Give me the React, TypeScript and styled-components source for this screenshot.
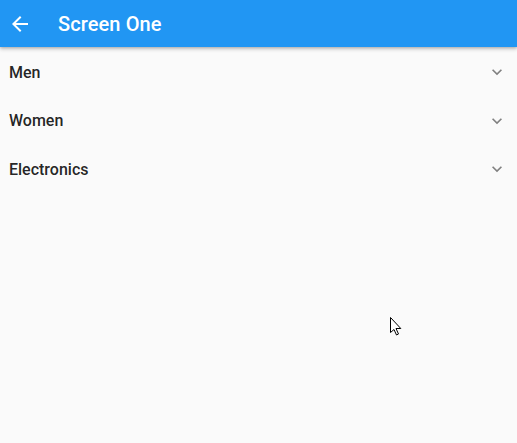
import React from "react";
import styled, { createGlobalStyle } from "styled-components";

const Global = createGlobalStyle`
  html, body { margin: 0; padding: 0; background: #fafafa; }
  body { font-family: Roboto, "Noto Sans", "Liberation Sans", sans-serif; }
`;

const Page = styled.div`
  position: relative;
  width: 517px;
  height: 443px;
  background: #fafafa;
  overflow: hidden;
`;

const AppBar = styled.header`
  height: 47px;
  background: #2196f3;
  display: flex;
  align-items: center;
  box-shadow: 0 2px 4px rgba(0, 0, 0, 0.22), 0 1px 2px rgba(0, 0, 0, 0.12);
  position: relative;
  z-index: 1;
`;

const IconButton = styled.button`
  width: 24px;
  height: 24px;
  margin-left: 8px;
  padding: 0;
  border: 0;
  background: none;
  display: flex;
  align-items: center;
  justify-content: center;
  color: #fff;
`;

const Title = styled.h1`
  margin: 0 0 0 26px;
  color: #fff;
  font-size: 20px;
  font-weight: 500;
  letter-spacing: 0.1px;
`;

const List = styled.div`
  display: flex;
  flex-direction: column;
  padding-top: 1px;
`;

const Tile = styled.div<{ $h: number }>`
  height: ${(p) => p.$h}px;
  display: flex;
  align-items: center;
  justify-content: space-between;
  padding: 0 10px 0 9px;
`;

const TileLabel = styled.span`
  font-size: 16px;
  font-weight: 500;
  color: rgba(0, 0, 0, 0.87);
`;

const Chevron = styled.span`
  width: 20px;
  height: 20px;
  display: flex;
  align-items: center;
  justify-content: center;
  color: #808080;
`;

const Cursor = styled.svg`
  position: absolute;
  left: 390px;
  top: 317px;
`;

const items = [
  { label: "Men", h: 48 },
  { label: "Women", h: 49 },
  { label: "Electronics", h: 48 },
];

export default function App() {
  return (
    <Page>
      <Global />
      <AppBar>
        <IconButton aria-label="back">
          <svg width="24" height="24" viewBox="0 0 24 24">
            <path
              fill="currentColor"
              d="M20 11H7.83l5.59-5.59L12 4l-8 8 8 8 1.41-1.41L7.83 13H20v-2z"
            />
          </svg>
        </IconButton>
        <Title>Screen One</Title>
      </AppBar>
      <List>
        {items.map((it) => (
          <Tile key={it.label} $h={it.h}>
            <TileLabel>{it.label}</TileLabel>
            <Chevron>
              <svg width="20" height="20" viewBox="0 0 24 24">
                <path
                  fill="currentColor"
                  d="M16.59 8.59L12 13.17 7.41 8.59 6 10l6 6 6-6z"
                />
              </svg>
            </Chevron>
          </Tile>
        ))}
      </List>
      <Cursor width="12" height="19" viewBox="0 0 12 19">
        <path
          d="M0.5 0.5 L0.5 15.5 L4 12.5 L6.5 18 L8.5 17 L6 11.5 L10.8 11.5 Z"
          fill="#fff"
          stroke="#000"
          strokeWidth="1"
          strokeLinejoin="round"
        />
      </Cursor>
    </Page>
  );
}
